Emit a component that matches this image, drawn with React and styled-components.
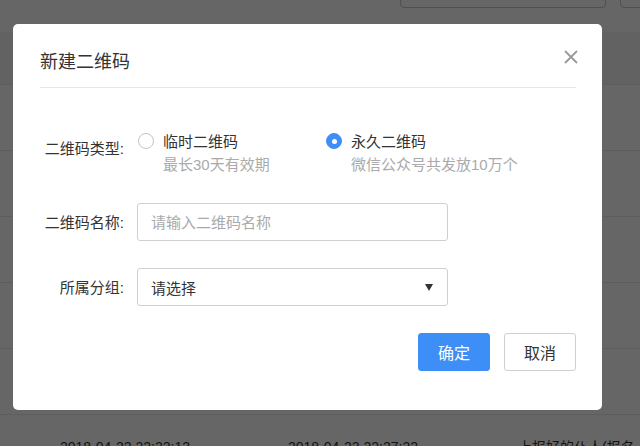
import React, { useState } from 'react';
import styled, { createGlobalStyle } from 'styled-components';

const GlobalStyle = createGlobalStyle`
  * { box-sizing: border-box; }
  body {
    margin: 0;
    font-family: "Liberation Sans", "Noto Sans CJK SC", sans-serif;
    background: #fff;
  }
`;

const rows = [
  { created: '2018-04-22 22:22:12', updated: '2018-04-22 22:27:22', note: '上报好的仆人(报名' },
];

const Page = styled.div`
  position: relative;
  width: 640px;
  height: 446px;
  overflow: hidden;
  background: #fff;
`;

const TopBar = styled.div`
  height: 32px;
  display: flex;
  justify-content: flex-end;
  gap: 14px;
  margin-right: -40px;
`;

const TopButton = styled.div`
  width: ${(p) => p.w}px;
  height: 40px;
  margin-top: -32px;
  border: 1px solid #c8c8c8;
  border-radius: 4px;
`;

const TableHead = styled.div`
  height: 53px;
  background: #f4f4f4;
  border-bottom: 1px solid #e8e8e8;
`;

const TableRow = styled.div`
  height: 66px;
  border-bottom: 1px solid #e8e8e8;
  display: grid;
  grid-template-columns: 228px 230px 1fr;
  align-items: start;
  padding: 22px 0 0 60px;
  font-size: 14px;
  line-height: 20px;
  color: #333;
`;

const Cell = styled.div`
  white-space: nowrap;
`;

const Overlay = styled.div`
  position: absolute;
  inset: 0;
  background: rgba(0, 0, 0, 0.6);
  padding: 24px 0 0 13px;
`;

const Dialog = styled.div`
  width: 589px;
  height: 386px;
  background: #fff;
  border-radius: 5px;
  padding: 0 26px 0 27px;
`;

const Header = styled.div`
  display: flex;
  align-items: center;
  justify-content: space-between;
  padding: 26px 0 13px;
  border-bottom: 1px solid #e6e6e6;
`;

const Title = styled.div`
  font-size: 18px;
  line-height: 24px;
  color: #333;
`;

const Close = styled.button`
  border: 0;
  background: none;
  padding: 0;
  width: 16px;
  height: 16px;
  margin: -10px -3px 0 0;
  cursor: pointer;
  display: flex;
`;

const Form = styled.div`
  padding-top: 42px;
  display: flex;
  flex-direction: column;
  gap: 27px;
`;

const Row = styled.div`
  display: flex;
  align-items: ${(p) => (p.top ? 'flex-start' : 'center')};
`;

const Label = styled.div`
  width: 97px;
  padding-right: 13px;
  text-align: right;
  font-size: 15px;
  line-height: 23px;
  color: #333;
  white-space: nowrap;
  margin-top: ${(p) => (p.top ? 7 : 0)}px;
`;

const RadioGroup = styled.div`
  display: flex;
  padding-left: 1px;
`;

const Option = styled.label`
  width: 188px;
  display: grid;
  grid-template-columns: 16px max-content;
  column-gap: 9px;
  cursor: pointer;
  white-space: nowrap;
`;

const Circle = styled.span`
  width: 16px;
  height: 16px;
  margin-top: 3px;
  border-radius: 50%;
  border: 1px solid ${(p) => (p.on ? '#3d8ff7' : '#c4c4c4')};
  background: ${(p) => (p.on ? '#3d8ff7' : '#fff')};
  display: flex;
  align-items: center;
  justify-content: center;
  &::after {
    content: '';
    width: 5px;
    height: 5px;
    border-radius: 50%;
    background: #fff;
    display: ${(p) => (p.on ? 'block' : 'none')};
  }
`;

const OptionText = styled.div`
  font-size: 15px;
  line-height: 23px;
  color: #333;
`;

const OptionHint = styled.div`
  grid-column: 2;
  font-size: 15px;
  line-height: 23px;
  color: #aaa;
`;

const Field = styled.div`
  width: 311px;
  height: 38px;
  border: 1px solid #cfcfcf;
  border-radius: 3px;
  display: flex;
  align-items: center;
  justify-content: space-between;
  padding: 0 14px 0 13px;
  font-size: 15px;
  color: #333;
`;

const Input = styled.input`
  border: 0;
  outline: none;
  width: 100%;
  font: inherit;
  color: #333;
  padding: 0;
  &::placeholder { color: #aaa; }
`;

const Caret = styled.span`
  width: 0;
  height: 0;
  border-left: 4px solid transparent;
  border-right: 4px solid transparent;
  border-top: 7px solid #333;
`;

const Actions = styled.div`
  display: flex;
  justify-content: flex-end;
  gap: 14px;
`;

const Button = styled.button`
  width: 72px;
  height: 38px;
  border-radius: 3px;
  font-family: inherit;
  font-size: 16px;
  cursor: pointer;
  border: 1px solid ${(p) => (p.primary ? '#3d8ff7' : '#cfcfcf')};
  background: ${(p) => (p.primary ? '#3d8ff7' : '#fff')};
  color: ${(p) => (p.primary ? '#fff' : '#333')};
`;

export default function App() {
  const [type, setType] = useState('forever');
  const [name, setName] = useState('');

  return (
    <Page>
      <GlobalStyle />
      <TopBar>
        <TopButton w={206} />
        <TopButton w={60} />
      </TopBar>
      <TableHead />
      {[0, 1, 2, 3, 4].map((i) => (
        <TableRow key={i} />
      ))}
      {rows.map((r) => (
        <TableRow key={r.created}>
          <Cell>{r.created}</Cell>
          <Cell>{r.updated}</Cell>
          <Cell>{r.note}</Cell>
        </TableRow>
      ))}

      <Overlay>
        <Dialog>
          <Header>
            <Title>新建二维码</Title>
            <Close aria-label="关闭">
              <svg width="16" height="16" viewBox="0 0 16 16">
                <path d="M2 2 L14 14 M14 2 L2 14" stroke="#999" strokeWidth="1.8" fill="none" />
              </svg>
            </Close>
          </Header>

          <Form>
            <Row top>
              <Label top>二维码类型:</Label>
              <RadioGroup>
                <Option onClick={() => setType('temp')}>
                  <Circle on={type === 'temp'} />
                  <OptionText>临时二维码</OptionText>
                  <OptionHint>最长30天有效期</OptionHint>
                </Option>
                <Option onClick={() => setType('forever')}>
                  <Circle on={type === 'forever'} />
                  <OptionText>永久二维码</OptionText>
                  <OptionHint>微信公众号共发放10万个</OptionHint>
                </Option>
              </RadioGroup>
            </Row>

            <Row>
              <Label>二维码名称:</Label>
              <Field>
                <Input
                  placeholder="请输入二维码名称"
                  value={name}
                  onChange={(e) => setName(e.target.value)}
                />
              </Field>
            </Row>

            <Row>
              <Label>所属分组:</Label>
              <Field>
                <span>请选择</span>
                <Caret />
              </Field>
            </Row>

            <Actions>
              <Button primary>确定</Button>
              <Button>取消</Button>
            </Actions>
          </Form>
        </Dialog>
      </Overlay>
    </Page>
  );
}
